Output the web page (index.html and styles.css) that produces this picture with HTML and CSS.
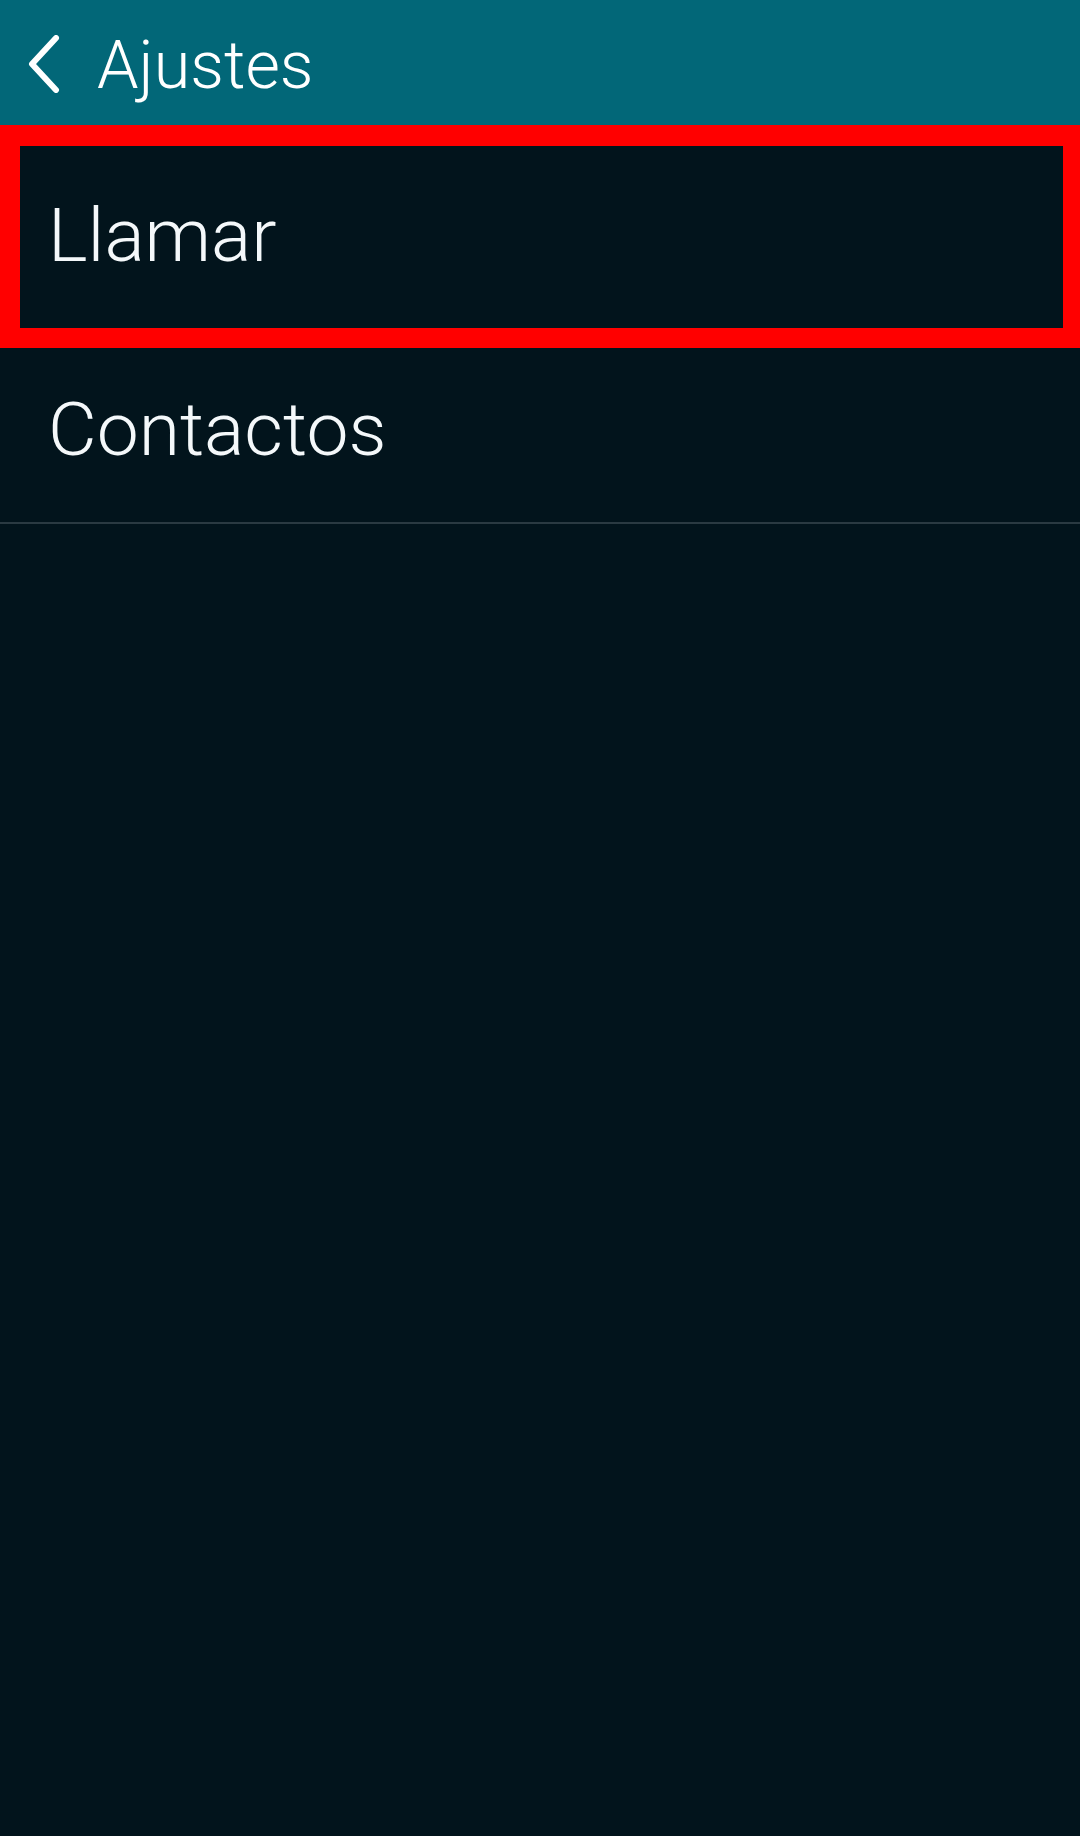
FILE: index.html
```html
<!DOCTYPE html>
<html lang="es">
<head>
<meta charset="utf-8">
<title>Ajustes</title>
<link rel="stylesheet" href="styles.css">
</head>
<body>
<header class="appbar">
  <svg class="back" width="34" height="58" viewBox="0 0 34 58" aria-hidden="true">
    <path d="M29 3 L5 29 L29 55" fill="none" stroke="#ffffff" stroke-width="6" stroke-linecap="round" stroke-linejoin="round"/>
  </svg>
  <h1 class="title">Ajustes</h1>
</header>
<main class="list">
  <div class="item item-highlight"><span class="label">Llamar</span></div>
  <div class="item item-divider"><span class="label">Contactos</span></div>
</main>
</body>
</html>
```
FILE: styles.css
```css
html, body {
  margin: 0;
  padding: 0;
}
body {
  width: 1080px;
  height: 1836px;
  background: #02141c;
  font-family: Roboto, "Noto Sans", "Liberation Sans", sans-serif;
  color: #ffffff;
  overflow: hidden;
}
.appbar {
  height: 125px;
  background: #026778;
  display: flex;
  align-items: center;
  padding-left: 27px;
  box-sizing: border-box;
}
.back {
  display: block;
  margin-top: 2px;
}
.title {
  margin: 0 0 0 36px;
  font-weight: 300;
  font-size: 66.5px;
  line-height: 1;
  color: #ffffff;
  margin-top: 5px;
}
.list {
  display: flex;
  flex-direction: column;
}
.item {
  display: flex;
  align-items: center;
  box-sizing: border-box;
  padding-left: 48px;
}
.label {
  font-weight: 300;
  font-size: 75px;
  line-height: 1;
  color: #f4f8fa;
}
.item-highlight {
  height: 223px;
  border: 20px solid #ff0000;
  border-top-width: 21px;
  border-right-width: 17px;
  padding-left: 28px;
}
.item-highlight .label {
  margin-top: -4px;
}
.item-divider {
  height: 176px;
  border-bottom: 2px solid #2a3a42;
}
.item-divider .label {
  margin-top: -12px;
}
```
